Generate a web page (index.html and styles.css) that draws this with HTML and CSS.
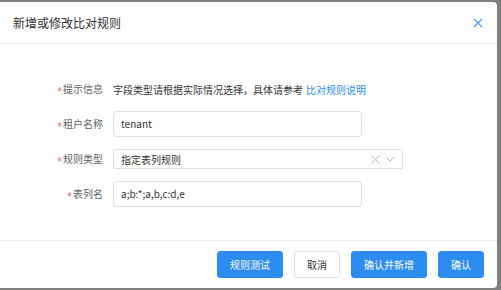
FILE: index.html
```html
<!DOCTYPE html>
<html lang="zh-CN">
<head>
    <meta charset="UTF-8">
    <title>新增或修改比对规则</title>
    <link rel="stylesheet" href="styles.css">
</head>
<body>
<div class="dialog">
    <div class="dialog-header">
        <span class="dialog-title">新增或修改比对规则</span>
        <svg class="close-icon" width="10" height="10" viewBox="0 0 10 10">
            <path d="M1 1L9 9M9 1L1 9" stroke="#409eff" stroke-width="1.2" fill="none"/>
        </svg>
    </div>
    <div class="dialog-body">
        <div class="form-row">
            <label class="form-label"><span class="required">*</span>提示信息</label>
            <div class="form-content hint">字段类型请根据实际情况选择，具体请参考 <a class="link">比对规则说明</a></div>
        </div>
        <div class="form-row">
            <label class="form-label"><span class="required">*</span>租户名称</label>
            <div class="form-content">
                <div class="input">tenant</div>
            </div>
        </div>
        <div class="form-row row-select">
            <label class="form-label"><span class="required">*</span>规则类型</label>
            <div class="form-content">
                <div class="select">
                    <span class="select-value">指定表列规则</span>
                    <svg class="select-clear" width="9" height="9" viewBox="0 0 9 9">
                        <path d="M0.5 0.5L8.5 8.5M8.5 0.5L0.5 8.5" stroke="#b4b8bf" stroke-width="1" fill="none"/>
                    </svg>
                    <svg class="select-arrow" width="8" height="5" viewBox="0 0 8 5">
                        <path d="M0.5 0.5L4 4L7.5 0.5" stroke="#b4b8bf" stroke-width="1" fill="none"/>
                    </svg>
                </div>
            </div>
        </div>
        <div class="form-row">
            <label class="form-label"><span class="required">*</span>表列名</label>
            <div class="form-content">
                <div class="input">a;b:*;a,b,c:d,e</div>
            </div>
        </div>
    </div>
    <div class="dialog-footer">
        <button class="btn btn-primary">规则测试</button>
        <button class="btn">取消</button>
        <button class="btn btn-primary">确认并新增</button>
        <button class="btn btn-primary">确认</button>
    </div>
</div>
</body>
</html>
```

FILE: styles.css
```css
body {
    margin: 0;
    background-color: #7f7f7f;
    font-family: "Noto Sans CJK SC", "Noto Sans", sans-serif;
    font-size: 10px;
    color: #333;
}
.dialog {
    margin-top: 2px;
    width: 497px;
    height: 286px;
    background-color: #fff;
    border-radius: 0 4px 4px 0;
    display: flex;
    flex-direction: column;
}
.dialog-header {
    height: 41px;
    padding: 0 14px 0 13px;
    border-bottom: 1px solid #f0f0f0;
    display: flex;
    align-items: center;
    justify-content: space-between;
}
.dialog-title {
    font-size: 12px;
    color: #303133;
}
.close-icon {
    display: block;
}
.dialog-body {
    height: 164px;
    padding-top: 32px;
}
.form-row {
    display: flex;
    align-items: center;
    height: 26px;
    margin-bottom: 9px;
}
.row-select {
    margin-top: 1px;
}
.form-label {
    width: 103px;
    margin-right: 10px;
    text-align: right;
    color: #606266;
    line-height: 26px;
}
.required {
    display: inline-block;
    color: #f56c6c;
    font-family: "Liberation Sans", sans-serif;
    font-size: 12px;
    line-height: 10px;
    vertical-align: -3px;
    margin-right: 1px;
}
.form-content {
    display: flex;
    align-items: center;
}
.hint {
    color: #333;
}
.link {
    color: #2d8cf0;
    margin-left: 3px;
}
.input {
    width: 249px;
    height: 26px;
    box-sizing: border-box;
    border: 1px solid #dcdfe6;
    border-radius: 4px;
    padding: 0 7px;
    line-height: 24px;
    color: #333;
}
.select {
    width: 290px;
    height: 20px;
    box-sizing: border-box;
    border: 1px solid #dcdfe6;
    border-radius: 2px;
    padding: 0 7px;
    display: flex;
    align-items: center;
}
.select-value {
    flex: 1;
    color: #333;
}
.select-clear {
    margin-right: 6px;
}
.select-arrow {
    margin-right: 1px;
}
.dialog-footer {
    flex: 1;
    border-top: 1px solid #f0f0f0;
    display: flex;
    justify-content: flex-end;
    align-items: flex-start;
    gap: 11px;
    padding: 10px 13px 0 0;
}
.btn {
    height: 27px;
    padding: 0 12px;
    border: 1px solid #dcdfe6;
    border-radius: 3px;
    background-color: #fff;
    color: #333;
    font-family: inherit;
    font-size: 10px;
}
.btn-primary {
    background-color: #2d8cf0;
    border-color: #2d8cf0;
    color: #fff;
}
```
